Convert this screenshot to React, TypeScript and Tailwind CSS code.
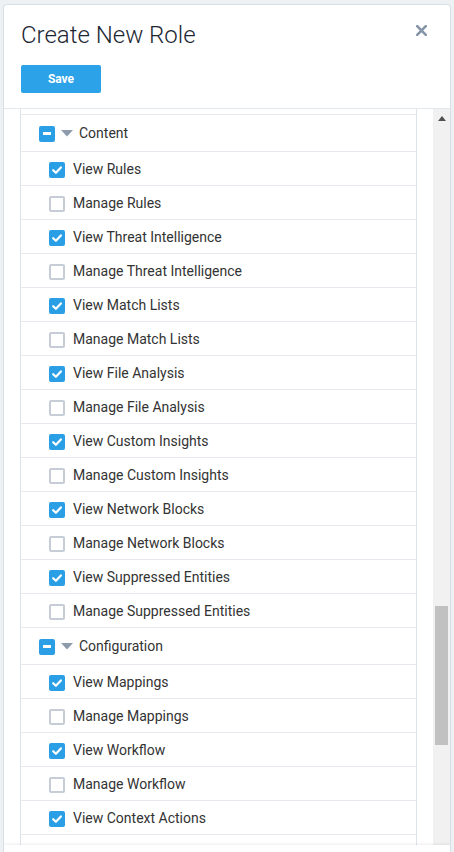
import React from "react";

type Item = { label: string; checked: boolean };
type Group = { title: string; items: Item[] };

const groups: Group[] = [
  {
    title: "Content",
    items: [
      { label: "View Rules", checked: true },
      { label: "Manage Rules", checked: false },
      { label: "View Threat Intelligence", checked: true },
      { label: "Manage Threat Intelligence", checked: false },
      { label: "View Match Lists", checked: true },
      { label: "Manage Match Lists", checked: false },
      { label: "View File Analysis", checked: true },
      { label: "Manage File Analysis", checked: false },
      { label: "View Custom Insights", checked: true },
      { label: "Manage Custom Insights", checked: false },
      { label: "View Network Blocks", checked: true },
      { label: "Manage Network Blocks", checked: false },
      { label: "View Suppressed Entities", checked: true },
      { label: "Manage Suppressed Entities", checked: false },
    ],
  },
  {
    title: "Configuration",
    items: [
      { label: "View Mappings", checked: true },
      { label: "Manage Mappings", checked: false },
      { label: "View Workflow", checked: true },
      { label: "Manage Workflow", checked: false },
      { label: "View Context Actions", checked: true },
      { label: "Manage Context Actions", checked: false },
    ],
  },
];

function Check({ checked }: { checked: boolean }) {
  if (checked) {
    return (
      <span className="flex h-[16px] w-[16px] shrink-0 items-center justify-center rounded-[2px] bg-[#2b9fe6]">
        <svg width="12" height="12" viewBox="0 0 12 12">
          <path d="M2.2 6.2 L4.9 8.8 L9.9 3.4" fill="none" stroke="#fff" strokeWidth="2.2" strokeLinecap="round" strokeLinejoin="round" />
        </svg>
      </span>
    );
  }
  return <span className="h-[16px] w-[16px] shrink-0 rounded-[2px] border-2 border-[#c6cdd6] bg-white" />;
}

function GroupRow({ title }: { title: string }) {
  return (
    <div className="flex h-[37px] items-center border-b border-[#e6eaee] pl-[18px] pt-[1px]">
      <span className="flex h-[16px] w-[16px] shrink-0 items-center justify-center rounded-[2px] bg-[#2b9fe6]">
        <span className="h-[3px] w-[8px] bg-white" />
      </span>
      <svg width="12" height="7" viewBox="0 0 12 7" className="ml-[6px]">
        <path d="M0 0 L12 0 L6 6.5 Z" fill="#8d9bad" />
      </svg>
      <span className="ml-[6px] text-[14px] text-[#333]">{title}</span>
    </div>
  );
}

function ItemRow({ item }: { item: Item }) {
  return (
    <div className="flex h-[34px] items-center gap-[8px] border-b border-[#e6eaee] pl-[28px] pt-[2px]">
      <Check checked={item.checked} />
      <span className="text-[14px] text-[#333]">{item.label}</span>
    </div>
  );
}

export default function App() {
  return (
    <div
      className="h-[852px] w-[454px] overflow-hidden bg-[#eef1f4] pl-[3px] pt-[4px]"
      style={{ fontFamily: "Roboto, 'Liberation Sans', sans-serif" }}
    >
      <div className="flex h-[848px] w-[448px] flex-col overflow-hidden rounded-t-[4px] border border-b-0 border-[#d8dfe6] bg-white">
        {/* Header */}
        <div className="relative shrink-0 border-b border-[#e3e8ed] px-[17px] pb-[15px] pt-[14px]">
          <h1 className="text-[24px] font-light leading-[32px] text-[#1c2733]">Create New Role</h1>
          <button className="absolute right-[22px] top-[19px] p-[1px]">
            <svg width="11" height="11" viewBox="0 0 11 11">
              <path d="M1.2 1.2 L9.8 9.8 M9.8 1.2 L1.2 9.8" stroke="#8696a9" strokeWidth="2.6" strokeLinecap="round" />
            </svg>
          </button>
          <button className="mt-[14px] h-[28px] w-[80px] rounded-[2px] bg-[#2ca2e8] text-[12px] font-bold text-white">
            Save
          </button>
        </div>

        {/* Body */}
        <div className="flex h-[736px] shrink-0 overflow-hidden">
          <div className="flex-1 overflow-hidden px-[16px]">
            <div className="border-x border-[#dde3ea]">
              <div className="h-[6px] border-b border-[#e6eaee]" />
              {groups.map((g) => (
                <div key={g.title}>
                  <GroupRow title={g.title} />
                  {g.items.map((it) => (
                    <ItemRow key={it.label} item={it} />
                  ))}
                </div>
              ))}
            </div>
          </div>
          {/* scrollbar */}
          <div className="flex w-[17px] shrink-0 flex-col bg-[#f1f1f1]">
            <div className="flex h-[17px] items-center justify-center pt-[1px]">
              <svg width="8" height="5" viewBox="0 0 8 5">
                <path d="M0 5 L4 0 L8 5 Z" fill="#505050" />
              </svg>
            </div>
            <div className="ml-[2px] mt-[480px] h-[139px] w-[13px] bg-[#c1c1c1]" />
          </div>
        </div>

        {/* Footer */}
        <div className="flex-1 bg-white shadow-[0_-1px_3px_rgba(0,0,0,0.08)]" />
      </div>
    </div>
  );
}
